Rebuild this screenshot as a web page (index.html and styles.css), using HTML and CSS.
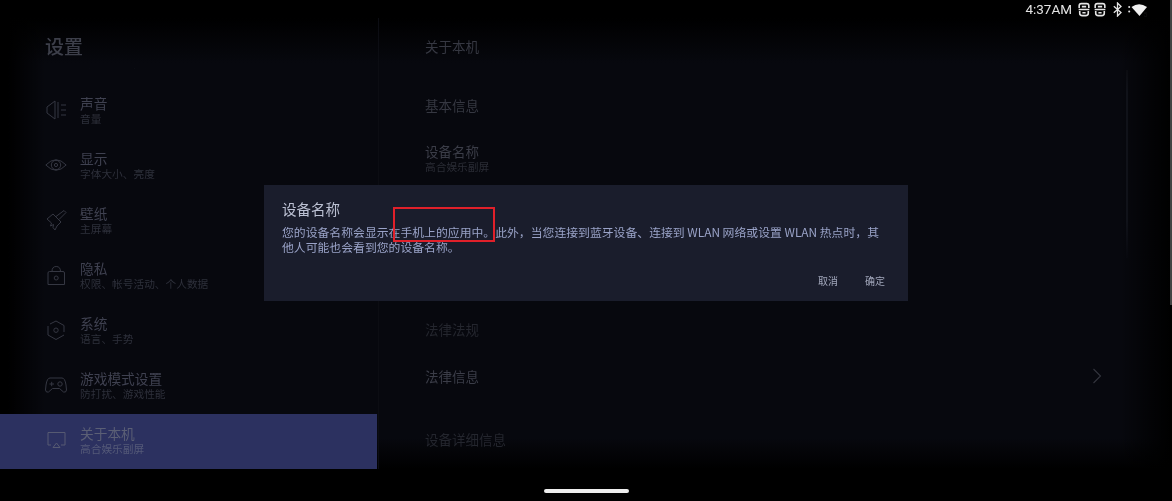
FILE: index.html
```html
<!DOCTYPE html>
<html lang="zh-CN">
<head>
    <meta charset="UTF-8">
    <title>设置</title>
    <link rel="stylesheet" href="styles.css">
</head>
<body>
    <div class="screen">
        <div class="status-bar">
            <span class="clock">4:37AM</span>
            <svg class="st-icon" width="14" height="15" viewBox="0 0 13 14" fill="none" stroke="#e4e4e4" stroke-width="1.500"><path d="M2 5.500V3.500Q2 1.500 4 1.500H9Q11 1.500 11 3.500V5.500M1.500 7H11.500M2.500 8.500V10.500Q2.500 12.700 5 12.700H8Q10.500 12.700 10.500 10.500V8.500M4.500 4.300H8.500M5 10H8"/></svg>
            <svg class="st-icon" width="14" height="15" viewBox="0 0 13 14" fill="none" stroke="#e4e4e4" stroke-width="1.500"><path d="M2 5.500V3.500Q2 1.500 4 1.500H9Q11 1.500 11 3.500V5.500M1.500 7H11.500M2.500 8.500V10.500Q2.500 12.700 5 12.700H8Q10.500 12.700 10.500 10.500V8.500M4.500 4.300H8.500M5 10H8"/></svg>
            <svg class="st-icon bt" width="9" height="15" viewBox="0 0 9 15" fill="none" stroke="#e4e4e4" stroke-width="1.300"><path d="M.8 4.200L8 10.500L4.500 14V1L8 4.500L.8 10.800"/></svg>
            <svg class="st-icon wifi" width="20" height="15" viewBox="0 0 20 15"><circle cx="1.200" cy="5" r="1" fill="#e4e4e4"/><circle cx="1.200" cy="9.500" r="1" fill="#e4e4e4"/><path d="M3.500 5Q11 -.5 19 5L11.500 14Z" fill="#f0f0f0"/><text x="15.500" y="14.500" class="wifi-num">5</text></svg>
        </div>

        <div class="app">
            <aside class="sidebar">
                <h1 class="side-title">设置</h1>
                <ul class="side-list">
                    <li class="side-item partial">
                        <div class="item-sub">权限、默认应用设置</div>
                    </li>
                    <li class="side-item">
                        <svg class="side-icon" viewBox="0 0 22 22" fill="none"><path d="M2 8L10 2V20L2 14Z"/><path d="M13 3V19M16 6H21M16 11H21M16 16H21"/></svg>
                        <div><div class="item-name">声音</div><div class="item-sub">音量</div></div>
                    </li>
                    <li class="side-item">
                        <svg class="side-icon" viewBox="0 0 22 22" fill="none"><path d="M.8 11Q11 .5 21.200 11Q11 21.500 .8 11Z"/><circle cx="11" cy="11" r="4.700"/><circle cx="11" cy="11" r="1.600"/></svg>
                        <div><div class="item-name">显示</div><div class="item-sub">字体大小、亮度</div></div>
                    </li>
                    <li class="side-item">
                        <svg class="side-icon" viewBox="0 0 22 22" fill="none"><path d="M2 10L8 5L16 13L12 17L10 21L8 18.500L8.500 15.500L5.500 17L6.500 14Z"/><path d="M11 7.500L19 1.500L21 3.500L14 10.500"/></svg>
                        <div><div class="item-name">壁纸</div><div class="item-sub">主屏幕</div></div>
                    </li>
                    <li class="side-item">
                        <svg class="side-icon" viewBox="0 0 22 22" fill="none"><path d="M3 9Q3 7.500 4.500 7.500H18Q19.500 7.500 19.500 9V20.500H3Z"/><path d="M7 7.500Q7 2.500 11.200 2.500Q15.500 2.500 15.500 7.500"/><circle cx="11.200" cy="14" r="2"/></svg>
                        <div><div class="item-name">隐私</div><div class="item-sub">权限、帐号活动、个人数据</div></div>
                    </li>
                    <li class="side-item">
                        <svg class="side-icon" viewBox="0 0 22 22" fill="none"><path d="M5 5L11 2L19 6.500V13M19 16L11 20.500L3 16V7"/><circle cx="11" cy="11.200" r="2.200"/></svg>
                        <div><div class="item-name">系统</div><div class="item-sub">语言、手势</div></div>
                    </li>
                    <li class="side-item">
                        <svg class="side-icon" viewBox="0 0 22 22" fill="none"><path d="M5 4H17Q20 4 21 11L21.500 16Q21 19 18.500 18L14.500 14.500H7.500L3.500 18Q1 19 .5 16L1 11Q2 4 5 4Z"/><path d="M4.500 10H9M6.700 7.800V12.200"/><circle cx="15" cy="10" r="2.200"/></svg>
                        <div><div class="item-name">游戏模式设置</div><div class="item-sub">防打扰、游戏性能</div></div>
                    </li>
                    <li class="side-item active">
                        <svg class="side-icon" viewBox="0 0 22 22" fill="none"><path d="M6 16H3V3.500H20V16H16"/><path d="M11.500 14L15 18.500H8Z"/></svg>
                        <div><div class="item-name">关于本机</div><div class="item-sub">高合娱乐副屏</div></div>
                    </li>
                </ul>
            </aside>

            <main class="detail">
                <h2 class="detail-title">关于本机</h2>
                <div class="detail-body">
                    <section class="group first">
                        <h3 class="group-title">基本信息</h3>
                        <div class="row">
                            <div class="row-name">设备名称</div>
                            <div class="row-sub">高合娱乐副屏</div>
                        </div>
                    </section>
                    <section class="group legal">
                        <h3 class="group-title dim">法律法规</h3>
                        <div class="row link">
                            <div class="row-name">法律信息</div>
                            <svg class="chevron" width="10" height="16" viewBox="0 0 10 16" fill="none"><path d="M1.500 1L8.500 8L1.500 15"/></svg>
                        </div>
                    </section>
                    <section class="group last">
                        <h3 class="group-title dim">设备详细信息</h3>
                    </section>
                    <div class="scroll-thumb"></div>
                </div>
            </main>
        </div>

        <div class="nav-bar"><span class="home-pill"></span></div>

        <div class="dialog">
            <h4 class="dialog-title">设备名称</h4>
            <p class="dialog-text">您的设备名称会显示在手机上的应用中。此外，当您连接到蓝牙设备、连接到 WLAN 网络或设置 WLAN 热点时，其他人可能也会看到您的设备名称。</p>
            <div class="dialog-actions">
                <span class="dialog-btn">取消</span>
                <span class="dialog-btn">确定</span>
            </div>
        </div>
        <div class="red-mark"></div>
        <div class="edge-line"></div>
    </div>
</body>
</html>
```

FILE: styles.css
```css
* {
    box-sizing: border-box;
}
html, body {
    margin: 0;
    padding: 0;
    background: #000;
}
body {
    font-family: "Noto Sans CJK SC", "Noto Sans", sans-serif;
}
h1, h2, h3, h4, p, ul {
    margin: 0;
    padding: 0;
    font-weight: 400;
}
.screen {
    position: relative;
    width: 1172px;
    height: 501px;
    overflow: hidden;
    display: flex;
    flex-direction: column;
    background: #000;
    filter: blur(.35px);
}
.status-bar {
    height: 18px;
    flex: none;
    display: flex;
    align-items: center;
    justify-content: flex-end;
    padding-right: 24px;
    color: #e4e4e4;
    font-family: "Roboto", sans-serif;
    font-size: 13.500px;
}
.clock {
    margin-right: 5px;
}
.st-icon {
    margin-right: 2px;
}
.bt {
    margin-left: 4px;
    margin-right: 6px;
}
.wifi {
    margin-right: 0;
}
.wifi-num {
    font-size: 7px;
    fill: #111;
}
.app {
    flex: 1;
    min-height: 0;
    display: flex;
    background:
        linear-gradient(to right, #000 8px, transparent 45px, transparent 1120px, #000 1170px),
        linear-gradient(#000, #07080e 45px, #07080e 420px, #000);
}
.sidebar {
    width: 379px;
    flex: none;
    display: flex;
    flex-direction: column;
    border-right: 1px solid #0c0d13;
    padding-right: 1px;
}
.side-title {
    height: 50px;
    flex: none;
    padding: 15px 0 0 45px;
    font-size: 19px;
    line-height: 26px;
    font-weight: 500;
    color: #3d3f4a;
}
.side-list {
    flex: 1;
    min-height: 0;
    list-style: none;
}
.side-item {
    height: 55px;
    display: flex;
    align-items: center;
    gap: 13px;
    padding: 0 0 4px 45px;
}
.side-item.partial {
    height: 16px;
    overflow: hidden;
    align-items: flex-start;
    padding: 0 0 0 80px;
}
.partial .item-sub {
    margin-top: -12px;
}
.side-item.active {
    background: #2c3160;
}
.side-icon {
    width: 22px;
    height: 22px;
    flex: none;
    stroke: #353742;
    stroke-width: 1;
}
.item-name {
    font-size: 13.700px;
    line-height: 18px;
    color: #3f4150;
}
.item-sub {
    font-size: 10.700px;
    line-height: 13px;
    color: #2e303b;
}
.active .item-name {
    color: #5b5f75;
}
.active .item-sub {
    color: #555a78;
}
.active .side-icon {
    stroke: #565a72;
}
.detail {
    flex: 1;
    display: flex;
    flex-direction: column;
    padding-left: 46px;
}
.detail-title {
    height: 50px;
    flex: none;
    padding-top: 15px;
    font-size: 13.500px;
    line-height: 26px;
    color: #363842;
}
.detail-body {
    position: relative;
    flex: 1;
}
.group-title {
    font-size: 13.500px;
    line-height: 20px;
    color: #363842;
}
.group-title.dim {
    color: #24262e;
}
.first {
    padding-top: 27px;
}
.row {
    display: flex;
    flex-direction: column;
}
.first .row {
    padding-top: 26px;
}
.row-name {
    font-size: 13.500px;
    line-height: 20px;
    color: #3b3d48;
}
.row-sub {
    font-size: 10.700px;
    line-height: 12px;
    color: #2b2d36;
}
.legal {
    padding-top: 146px;
}
.link {
    padding-top: 27px;
    padding-right: 70px;
    flex-direction: row;
    justify-content: space-between;
    align-items: center;
}
.chevron {
    stroke: #33353e;
    stroke-width: 1.100;
}
.last {
    padding-top: 43px;
}
.scroll-thumb {
    position: absolute;
    top: 2px;
    left: 701px;
    width: 2px;
    height: 188px;
    background: linear-gradient(#0b0c11, #101219 12%, #101219 80%, #07080e);
}
.nav-bar {
    height: 32px;
    flex: none;
    display: flex;
    justify-content: center;
    padding-top: 20px;
}
.home-pill {
    width: 85px;
    height: 3.500px;
    background: #eee;
    border-radius: 2px;
}
.dialog {
    position: absolute;
    left: 264px;
    top: 185px;
    width: 644px;
    height: 116px;
    padding: 14px 18px 0;
    background: #1a1d2c;
    display: flex;
    flex-direction: column;
}
.dialog-title {
    font-size: 14.500px;
    line-height: 20px;
    color: #bcc1d3;
}
.dialog-text {
    margin-top: 5px;
    padding-right: 6px;
    font-size: 11.850px;
    line-height: 15px;
    color: #9aa3c8;
}
.dialog-actions {
    margin-top: 20px;
    padding-right: 5px;
    display: flex;
    justify-content: flex-end;
    gap: 27px;
    font-size: 10px;
    line-height: 14px;
    color: #a2a7bb;
}
.red-mark {
    position: absolute;
    left: 393px;
    top: 207px;
    width: 102px;
    height: 35px;
    border: 2px solid #e0202a;
}
.edge-line {
    position: absolute;
    right: 0;
    top: 0;
    height: 305px;
    width: 2px;
    background: #444;
}
```
